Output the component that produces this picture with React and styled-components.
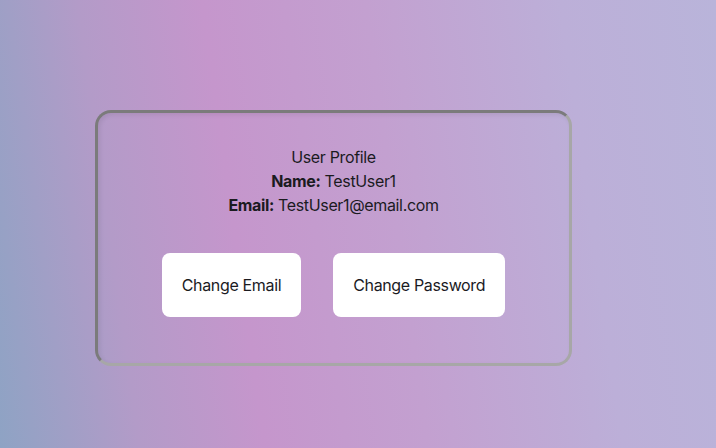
import React from "react";
import styled, { createGlobalStyle } from "styled-components";

const Global = createGlobalStyle`
  html, body { margin: 0; padding: 0; }
  body {
    font-family: Inter, "Noto Sans", sans-serif;
    color: #1b1b1f;
  }
`;

const Page = styled.div`
  width: 716px;
  height: 448px;
  box-sizing: border-box;
  background: linear-gradient(82deg, #8ea3c4 0%, #b39bc8 18%, #c596cc 34%, #c3a0d0 55%, #bcafd8 80%, #b9b4da 100%);
  padding: 110px 0 0 95px;
`;

const Card = styled.div`
  width: 477px;
  height: 256px;
  box-sizing: border-box;
  border: 3px solid;
  border-color: #7b7b7b #a7a7a7 #a7a7a7 #7b7b7b;
  border-radius: 16px;
  padding: 32px 0 0;
  display: flex;
  flex-direction: column;
  align-items: center;
  box-shadow: inset 2px 2px 4px rgba(0,0,0,0.08);
`;

const Info = styled.div`
  text-align: center;
  font-size: 16px;
  line-height: 24px;
  letter-spacing: -0.35px;
`;

const Line = styled.div``;

const Label = styled.b`
  font-weight: 700;
`;

const Actions = styled.div`
  display: flex;
  gap: 32px;
  margin-top: 36px;
`;

const Button = styled.button`
  background: #ffffff;
  border: none;
  border-radius: 8px;
  padding: 20px 20px;
  font-family: Inter, "Noto Sans", sans-serif;
  font-size: 16px;
  line-height: 24px;
  letter-spacing: -0.35px;
  color: #1b1b1f;
  cursor: pointer;
`;

export default function App() {
  return (
    <>
      <Global />
      <Page>
        <Card>
          <Info>
            <Line>User Profile</Line>
            <Line><Label>Name:</Label> TestUser1</Line>
            <Line><Label>Email:</Label> TestUser1@email.com</Line>
          </Info>
          <Actions>
            <Button>Change Email</Button>
            <Button>Change Password</Button>
          </Actions>
        </Card>
      </Page>
    </>
  );
}
